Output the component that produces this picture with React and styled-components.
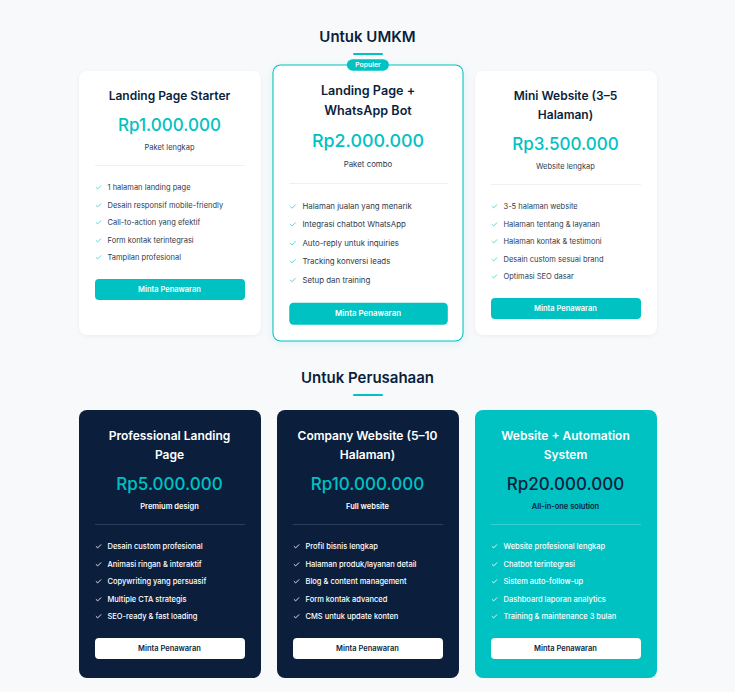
import React from 'react';
import styled, { createGlobalStyle, css } from 'styled-components';
import { Check } from 'lucide-react';

const NAVY = '#0b1f3d';
const TEAL = '#00c2c2';

const GlobalStyle = createGlobalStyle`
  body {
    margin: 0;
    background: #f8f9fb;
    font-family: Inter, "Noto Sans", sans-serif;
    color: ${NAVY};
  }
`;

const Page = styled.div`
  padding: 25px 0 16px;
`;

const Section = styled.section`
  display: flex;
  flex-direction: column;
  align-items: center;
  & + & {
    margin-top: 31px;
  }
`;

const Heading = styled.h2`
  margin: 0;
  font-size: 15px;
  line-height: 24px;
  font-weight: 600;
  color: ${NAVY};
`;

const Underline = styled.div`
  width: 30px;
  height: 2px;
  margin-top: 4px;
  background: ${TEAL};
  border-radius: 1px;
`;

const Grid = styled.div`
  display: grid;
  grid-template-columns: repeat(3, 1fr);
  gap: 16px;
  width: 578px;
  margin-top: ${(p) => p.$gap || 16}px;
`;

const variants = {
  light: css`
    background: #ffffff;
    box-shadow: 0 1px 4px rgba(15, 31, 61, 0.06);
  `,
  dark: css`
    background: ${NAVY};
    padding-top: 16px;
    padding-bottom: 19px;
  `,
  teal: css`
    background: ${TEAL};
    padding-top: 16px;
    padding-bottom: 19px;
  `,
};

const Card = styled.div`
  position: relative;
  display: flex;
  flex-direction: column;
  align-items: center;
  padding: 15px 16px 16px;
  border-radius: 8px;
  box-sizing: border-box;
  ${(p) => variants[p.$variant]}
  ${(p) =>
    p.$popular &&
    css`
      border: 1.5px solid ${TEAL};
      padding: 13.5px 14.5px 14.5px;
      transform: scale(1.05);
      box-shadow: 0 2px 8px rgba(0, 194, 194, 0.12);
    `}
`;

const Badge = styled.span`
  position: absolute;
  top: -6px;
  left: 50%;
  transform: translateX(-50%);
  padding: 0 8px;
  height: 11px;
  line-height: 11px;
  border-radius: 6px;
  background: ${TEAL};
  color: #fff;
  font-size: 6.5px;
  font-weight: 600;
`;

const titleColor = { light: NAVY, dark: '#ffffff', teal: '#ffffff' };
const priceColor = { light: TEAL, dark: TEAL, teal: NAVY };
const subColor = { light: '#2f3a4d', dark: '#ffffff', teal: NAVY };
const itemColor = { light: '#2f3a4d', dark: '#ffffff', teal: '#ffffff' };
const checkColor = { light: TEAL, dark: '#ffffff', teal: '#ffffff' };
const lineColor = {
  light: '#eef0f3',
  dark: 'rgba(255,255,255,0.14)',
  teal: 'rgba(255,255,255,0.22)',
};

const Title = styled.h3`
  margin: 0;
  font-size: 12px;
  line-height: 19px;
  font-weight: 600;
  text-align: center;
  color: ${(p) => titleColor[p.$variant]};
`;

const Price = styled.div`
  margin-top: 8px;
  font-size: 17px;
  line-height: 24px;
  font-weight: 500;
  color: ${(p) => priceColor[p.$variant]};
`;

const Sub = styled.div`
  margin-top: 5px;
  font-size: 7.5px;
  line-height: 11px;
  font-weight: ${(p) => (p.$variant === 'light' ? 400 : 600)};
  color: ${(p) => subColor[p.$variant]};
`;

const Divider = styled.hr`
  align-self: stretch;
  margin: 12px 0 0;
  border: 0;
  height: 1px;
  background: ${(p) => lineColor[p.$variant]};
`;

const List = styled.ul`
  align-self: stretch;
  list-style: none;
  margin: 16px 0 0;
  padding: 0;
  display: flex;
  flex-direction: column;
  gap: 6.5px;
`;

const Item = styled.li`
  display: flex;
  align-items: center;
  gap: 6px;
  font-size: 7.5px;
  line-height: 11px;
  font-weight: ${(p) => (p.$variant === 'light' ? 400 : 500)};
  color: ${(p) => itemColor[p.$variant]};
  svg {
    flex: none;
    color: ${(p) => checkColor[p.$variant]};
  }
`;

const Button = styled.button`
  align-self: stretch;
  margin-top: 16px;
  height: 21px;
  border: 0;
  border-radius: 4px;
  font-family: inherit;
  font-size: 7.5px;
  font-weight: 600;
  cursor: pointer;
  ${(p) =>
    p.$variant === 'light'
      ? css`
          background: ${TEAL};
          color: #fff;
        `
      : css`
          background: #fff;
          color: ${NAVY};
        `}
`;

const umkm = [
  {
    title: 'Landing Page Starter',
    price: 'Rp1.000.000',
    sub: 'Paket lengkap',
    items: [
      '1 halaman landing page',
      'Desain responsif mobile-friendly',
      'Call-to-action yang efektif',
      'Form kontak terintegrasi',
      'Tampilan profesional',
    ],
  },
  {
    title: ['Landing Page +', 'WhatsApp Bot'],
    price: 'Rp2.000.000',
    sub: 'Paket combo',
    popular: true,
    items: [
      'Halaman jualan yang menarik',
      'Integrasi chatbot WhatsApp',
      'Auto-reply untuk inquiries',
      'Tracking konversi leads',
      'Setup dan training',
    ],
  },
  {
    title: ['Mini Website (3–5', 'Halaman)'],
    price: 'Rp3.500.000',
    sub: 'Website lengkap',
    items: [
      '3-5 halaman website',
      'Halaman tentang & layanan',
      'Halaman kontak & testimoni',
      'Desain custom sesuai brand',
      'Optimasi SEO dasar',
    ],
  },
];

const perusahaan = [
  {
    title: ['Professional Landing', 'Page'],
    price: 'Rp5.000.000',
    sub: 'Premium design',
    variant: 'dark',
    items: [
      'Desain custom profesional',
      'Animasi ringan & interaktif',
      'Copywriting yang persuasif',
      'Multiple CTA strategis',
      'SEO-ready & fast loading',
    ],
  },
  {
    title: ['Company Website (5–10', 'Halaman)'],
    price: 'Rp10.000.000',
    sub: 'Full website',
    variant: 'dark',
    items: [
      'Profil bisnis lengkap',
      'Halaman produk/layanan detail',
      'Blog & content management',
      'Form kontak advanced',
      'CMS untuk update konten',
    ],
  },
  {
    title: ['Website + Automation', 'System'],
    price: 'Rp20.000.000',
    sub: 'All-in-one solution',
    variant: 'teal',
    items: [
      'Website profesional lengkap',
      'Chatbot terintegrasi',
      'Sistem auto-follow-up',
      'Dashboard laporan analytics',
      'Training & maintenance 3 bulan',
    ],
  },
];

const Plan = ({ plan }) => {
  const v = plan.variant || 'light';
  const lines = Array.isArray(plan.title) ? plan.title : [plan.title];
  return (
    <Card $variant={v} $popular={plan.popular}>
      {plan.popular && <Badge>Populer</Badge>}
      <Title $variant={v}>
        {lines.map((l, i) => (
          <React.Fragment key={i}>
            {i > 0 && <br />}
            {l}
          </React.Fragment>
        ))}
      </Title>
      <Price $variant={v}>{plan.price}</Price>
      <Sub $variant={v}>{plan.sub}</Sub>
      <Divider $variant={v} />
      <List>
        {plan.items.map((it) => (
          <Item key={it} $variant={v}>
            <Check size={7} strokeWidth={v === 'light' ? 2.2 : 3} />
            {it}
          </Item>
        ))}
      </List>
      <Button $variant={v}>Minta Penawaran</Button>
    </Card>
  );
};

const App = () => (
  <Page>
    <GlobalStyle />
    <Section>
      <Heading>Untuk UMKM</Heading>
      <Underline />
      <Grid>
        {umkm.map((p) => (
          <Plan key={p.price} plan={p} />
        ))}
      </Grid>
    </Section>
    <Section>
      <Heading>Untuk Perusahaan</Heading>
      <Underline />
      <Grid $gap={14}>
        {perusahaan.map((p) => (
          <Plan key={p.price} plan={p} />
        ))}
      </Grid>
    </Section>
  </Page>
);

export default App;
